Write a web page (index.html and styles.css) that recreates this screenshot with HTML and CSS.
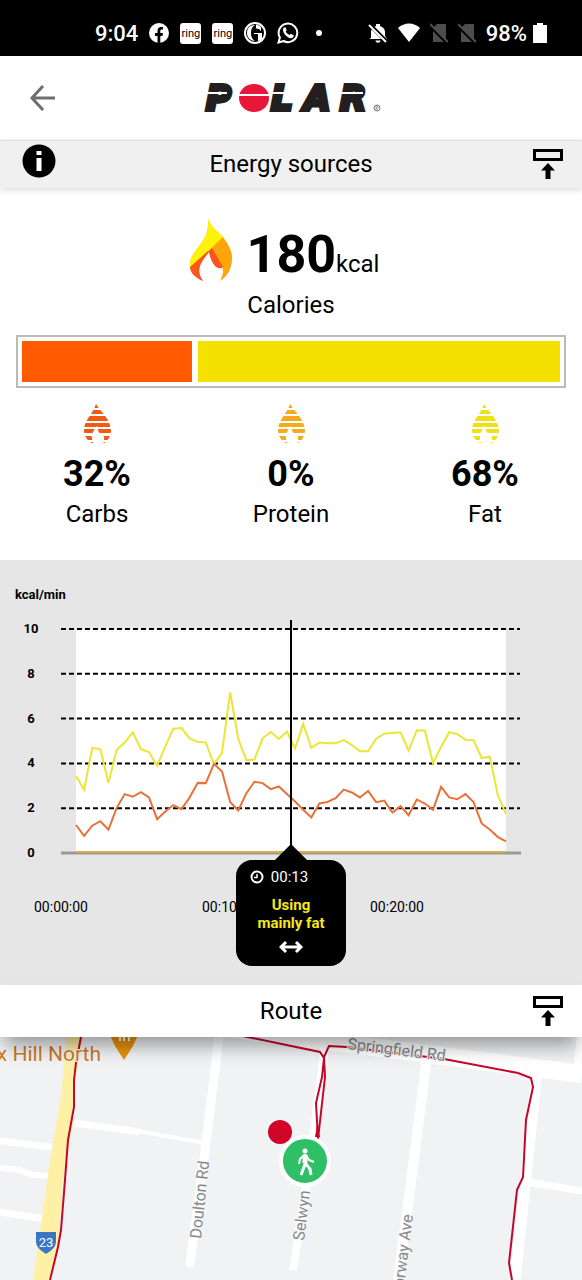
FILE: index.html
```html
<!DOCTYPE html>
<html lang="en">
<head>
  <meta charset="UTF-8">
  <meta name="viewport" content="width=device-width, initial-scale=1.0">
  <title>Energy sources</title>
  <link rel="stylesheet" href="styles.css">
</head>
<body>

  <!-- Shared shapes -->
  <svg class="defs" width="0" height="0" aria-hidden="true">
    <symbol id="collapse" viewBox="0 0 32 32">
      <path d="M2.500 2.500h27v9h-27z" fill="none" stroke="#000" stroke-width="3"/>
      <path d="M16 15l7 7.500h-4.500V31h-5v-8.500H9z"/>
    </symbol>
    <symbol id="stripes" viewBox="0 0 27 40">
      <clipPath id="rows">
        <path d="M0 0h27v4H0zM0 6h27v4H0zM0 12h27v5H0zM0 19h27v4H0zM0 25h27v4H0zM0 32h27v4H0zM0 38h27v1H0z"/>
      </clipPath>
      <path clip-path="url(#rows)" d="M12 0C15 6 26 14 27 26c0 6-3 11-8 14 2-5 1-9-1-10-3 0-4-3-5-8-3 4-6 8-5 12 0 3 1 4 2 6C3 37 0 32 0 26 0 16 9 10 12 0z"/>
    </symbol>
  </svg>

  <div class="status-bar">
    <div class="status-left">
      <span>9:04</span>
      <svg width="20" height="20" viewBox="0 0 20 20"><circle cx="10" cy="10" r="10" fill="#fff"/><path d="M8.500 20v-7H6v-3h2.500V8c0-2.600 1.500-4 3.700-4 1 0 1.800.1 1.800.1v2.500h-1.200c-1.200 0-1.500.7-1.500 1.500V10h2.600l-.4 3h-2.200v7z" fill="#000"/></svg>
      <span class="ring">ring</span>
      <span class="ring">ring</span>
      <svg width="22" height="22" viewBox="0 0 22 22"><circle cx="11" cy="11" r="10" fill="none" stroke="#fff" stroke-width="2"/><path d="M11 3C5 3 3 7 3 11s3 8 8 8c-3-2-4-4-4-8s1-6 4-8zM12 2.500v4c3 0 4 1 5 3V5c-1-1-3-2.500-5-2.500zM10 11h8v6c-1 1-2 2-4 2v-7h-4z" fill="#fff"/></svg>
      <svg width="22" height="22" viewBox="0 0 22 22"><path d="M1.500 20.500l1.400-5A9.300 9.300 0 1 1 6.500 19z" fill="none" stroke="#fff" stroke-width="2"/><path d="M7 5.500l1.500-.2 1.200 3-1 1.300c1 1.700 2 2.700 3.800 3.500l1.300-1.300 3 1.400c0 2-1.400 3-3 3C10 16 6 11 6 8c0-1 .3-2 1-2.500z" fill="#fff"/></svg>
      <i class="dot"></i>
    </div>
    <div class="status-right">
      <svg width="20" height="20" viewBox="0 0 20 20"><path d="M3 15V9c0-3 2-5 5-6V1h4v2c3 1 5 3 5 6v4l2 3H1zM7.500 17.500h5c0 3-5 3-5 0z" fill="#fff"/><path d="M1 1l18 18" stroke="#000" stroke-width="4"/><path d="M1 2l17 17" stroke="#fff" stroke-width="2"/></svg>
      <svg width="22" height="20" viewBox="0 0 22 20"><path d="M0 5c6-6 16-6 22 0L11 19z" fill="#fff"/></svg>
      <svg width="18" height="20" viewBox="0 0 18 20"><path d="M7 1h9v18H3V5z" fill="#4d4d4d"/><path d="M0 3l17 17" stroke="#000" stroke-width="3"/><path d="M0 1l18 18" stroke="#4d4d4d" stroke-width="2"/></svg>
      <svg width="18" height="20" viewBox="0 0 18 20"><path d="M7 1h9v18H3V5z" fill="#4d4d4d"/><path d="M0 3l17 17" stroke="#000" stroke-width="3"/><path d="M0 1l18 18" stroke="#4d4d4d" stroke-width="2"/></svg>
      <span class="battery">98%
        <svg width="14" height="20" viewBox="0 0 14 20"><path d="M4 0h6v2h4v18H0V2h4z" fill="#fff"/></svg>
      </span>
    </div>
  </div>

  <header>
    <button class="back" type="button" aria-label="Back">
      <svg width="26" height="26" viewBox="0 0 26 26"><path d="M25 13H2M13 1L2 13l11 12" fill="none" stroke="#6e6e6e" stroke-width="3"/></svg>
    </button>
    <svg class="logo" width="182" height="52" viewBox="0 -10 182 52" role="img" aria-label="Polar">
      <g class="logo-text">
        <text x="6" y="28">P</text>
        <text x="71" y="28">L</text>
        <text x="104" y="28">A</text>
        <text x="140" y="28">R</text>
      </g>
      <ellipse cx="54" cy="16" rx="15" ry="14" fill="#e8173a"/>
      <path d="M4 11h23M38 13h32M72 11h22M138 11h25" stroke="#fff" stroke-width="2"/>
      <circle cx="177" cy="26" r="3" fill="none" stroke="#777" stroke-width="1"/>
      <path d="M176 28v-4h2v2h-2l2 2" fill="none" stroke="#777" stroke-width=".6"/>
    </svg>
  </header>

  <div class="section-bar">
    <button class="info" type="button" aria-label="Information">
      <svg width="34" height="34" viewBox="0 0 34 34"><circle cx="17" cy="17" r="16.500"/><path d="M14.500 7h5v4h-5zM14.500 14h5v13h-5z" fill="#fff"/></svg>
    </button>
    <h2>Energy sources</h2>
    <button type="button" aria-label="Collapse energy sources"><svg width="32" height="32"><use href="#collapse"/></svg></button>
  </div>

  <main>
    <section class="summary">
      <div class="calories">
        <svg width="44" height="66" viewBox="0 0 44 66">
          <path d="M19 1c3 8 9 12 15 18 6 8 9 14 9 21 0 10-4 18-12 23 3-6 4-10 2-14-5 3-10-3-13-15-8 10-14 18-6 29C5 59 1 53 1 46c0-5 2-8 5-12 8-12 14-16 13-33z" fill="#ffa50a"/>
          <path d="M19 1c1 17-5 21-13 33-3 4-5 7-5 12v4l33-31C28 13 22 9 19 1z" fill="#fff30a"/>
          <path d="M1 49l18-16 1 1C12 44 6 52 14 63 5 59 1 54 1 49zM20 33l3-3 11 19c-5 4-12-2-14-16z" fill="#f8561c"/>
        </svg>
        <strong>180</strong><span>kcal</span>
      </div>
      <p>Calories</p>
      <div class="split">
        <div class="carbs"></div>
        <div class="fat"></div>
      </div>
      <div class="sources">
        <div class="source">
          <svg width="27" height="40" fill="#f05a14"><use href="#stripes"/></svg>
          <strong>32%</strong>
          <span>Carbs</span>
        </div>
        <div class="source">
          <svg width="27" height="40" fill="#f5a91c"><use href="#stripes"/></svg>
          <strong>0%</strong>
          <span>Protein</span>
        </div>
        <div class="source">
          <svg width="27" height="40" fill="#efe019"><use href="#stripes"/></svg>
          <strong>68%</strong>
          <span>Fat</span>
        </div>
      </div>
    </section>

    <section class="chart">
      <svg id="energyChart" viewBox="0 0 582 425"></svg>
      <div class="tooltip">
        <div class="time">
          <svg width="14" height="14" viewBox="0 0 14 14" fill="none" stroke="#fff"><circle cx="7" cy="7" r="5.500" stroke-width="2"/><path d="M7 4v3.500H4" stroke-width="1.500"/></svg>
          00:13
        </div>
        <b>Using<br>mainly fat</b>
        <svg width="24" height="14" viewBox="0 0 24 14"><path d="M2 7h20M7 2L2 7l5 5M17 2l5 5-5 5" fill="none" stroke="#fff" stroke-width="3"/></svg>
      </div>
    </section>

    <div class="section-bar route-bar">
      <h2>Route</h2>
      <button type="button" aria-label="Collapse route"><svg width="32" height="32"><use href="#collapse"/></svg></button>
    </div>

    <section class="map">
      <svg viewBox="0 0 582 243" preserveAspectRatio="xMidYMin slice">
        <!-- streets -->
        <g fill="none" stroke="#fff">
          <path d="M215-10L420 16l162 21" stroke-width="18"/>
          <path d="M219 0l-16 130-13 96" stroke-width="9" stroke-linecap="round"/>
          <path d="M325 10L309 130l-16 103" stroke-width="8"/>
          <path d="M427 20l-20 156-9 67" stroke-width="10"/>
          <path d="M537 35l-22 208" stroke-width="11"/>
          <path d="M580 0l-3 35M528 145l54 9M0 104l52 6M0 175l43 7M74 86l66 9" stroke-width="7"/>
          <path d="M0 131l20 2 12 5 20 1" stroke-width="6"/>
          <path d="M138 94l67 12" stroke-width="4"/>
        </g>
        <path d="M67 0h16l-8 43-2 43-10 57-5 64-9 36H33l17-120 10-57z" fill="#fff0a6"/>
        <!-- walked route -->
        <g fill="none" stroke="#c4062b" stroke-width="2">
          <path d="M81 0l-5 26-2 17v27l-6 33-3 40-4 50-3 17-8 33"/>
          <path d="M238-2l82 17 4 6-2 19-6 26 2 36 7-62-1-20 5-11 18 1 97 12 74 14 13 5 2 9-7 33-3 57-6 13-8 73 3 17"/>
        </g>
        <g class="street">
          <text transform="translate(347 12) rotate(7)">Springfield Rd</text>
          <text transform="translate(201 202) rotate(-84)">Doulton Rd</text>
          <text transform="translate(304 204) rotate(-83)">Selwyn St</text>
          <text transform="translate(413 178) rotate(-83)" text-anchor="end">Norway Ave</text>
        </g>
        <text class="suburb" x="101" y="24" text-anchor="end">Box Hill North</text>
        <path d="M110-2h28l-5 11-9 14-9-14z" fill="#e8930c"/>
        <path d="M120-2v6M124-2v6M129-2v6" stroke="#fff" stroke-width="2"/>
        <path d="M36 195h20v9c0 6-4 9-10 13-6-4-10-7-10-13z" fill="#3b76c2"/>
        <text class="shield" x="46" y="210" text-anchor="middle">23</text>
        <!-- markers -->
        <path d="M317 88l-2 12h5z" fill="#c4062b"/>
        <circle cx="280" cy="95" r="12" fill="#d00428"/>
        <circle cx="305" cy="124" r="24" fill="#2fbf66" stroke="#fff" stroke-width="4"/>
        <g fill="none" stroke="#fff" stroke-width="3" stroke-linejoin="round">
          <path d="M305 117v10l-4 11M305 126l5 6 1 6" stroke-width="3"/>
          <path d="M304 118l-4 4-1 5M306 118l3 5 5 2" stroke-width="2"/>
          <path d="M305 118v8" stroke-width="5"/>
        </g>
        <circle cx="305" cy="114" r="2.500" fill="#fff"/>
      </svg>
    </section>
  </main>

  <script>
    // kcal/min, one sample every 30 seconds
    const fat = [3.44, 2.82, 4.69, 4.64, 3.12, 4.6, 4.93, 5.39, 4.63, 4.51, 3.89, 4.75, 5.55, 5.58, 5.12, 4.96, 4.94, 3.96,
      4.48, 7.18, 5.09, 4.14, 4.17, 5.12, 5.4, 5.09, 5.42, 4.67, 5.76, 4.7, 4.93, 4.9, 4.9, 5.04, 4.82, 4.54,
      4.54, 5.1, 5.33, 5.36, 5.39, 4.57, 5.47, 5.47, 4.01, 4.73, 5.39, 5.3, 5.06, 5.04, 4.24, 4.3, 2.57, 1.75];
    const carbs = [1.25, 0.77, 1.22, 1.42, 1.04, 2, 2.63, 2.51, 2.72, 2.48, 1.51, 1.85, 2.14, 1.96, 2.48, 3.13, 3.12, 3.98,
      3.64, 2.28, 1.9, 2.67, 3.18, 3.12, 2.85, 2.97, 2.63, 2.3, 1.93, 1.59, 2.21, 2.28, 2.45, 2.83, 2.7, 2.48,
      2.77, 2.27, 2.34, 1.81, 2.09, 1.69, 2.39, 2.21, 1.93, 2.95, 2.48, 2.4, 2.63, 2.27, 1.32, 1.05, 0.71, 0.52];

    const left = 76;
    const right = 506;
    const bottom = 293;
    const unit = 22.4;

    function linePoints(values) {
      const step = (right - left) / (values.length - 1);
      return values.map((v, i) => `${left + i * step},${bottom - v * unit}`).join(' ');
    }

    function renderChart() {
      let svg = `<rect x="${left}" y="69" width="${right - left}" height="224" fill="#fff"/>`;
      svg += '<text class="unit" x="15" y="39">kcal/min</text>';

      for (let v = 0; v <= 10; v += 2) {
        const y = bottom - v * unit;
        svg += `<text class="y-label" x="31" y="${y + 4}">${v}</text>`;
        if (v > 0) {
          svg += `<line class="grid" x1="61" y1="${y}" x2="520" y2="${y}"/>`;
        }
      }

      svg += `<line x1="61" y1="${bottom}" x2="521" y2="${bottom}" stroke="#999" stroke-width="3"/>`;
      svg += `<line x1="${left}" y1="${bottom - 1}" x2="${right}" y2="${bottom - 1}" stroke="#d9ad45" stroke-width="2"/>`;
      svg += `<polyline class="fat-line" points="${linePoints(fat)}"/>`;
      svg += `<polyline class="carbs-line" points="${linePoints(carbs)}"/>`;

      ['00:00:00', '00:10:00', '00:20:00'].forEach((label, i) => {
        svg += `<text class="x-label" x="${61 + i * 168}" y="352">${label}</text>`;
      });

      svg += '<line x1="291" y1="60" x2="291" y2="290" stroke="#000" stroke-width="2"/>';
      svg += '<path d="M291 284l16 16h-32z"/>';
      document.getElementById('energyChart').innerHTML = svg;
    }

    // Initial render
    renderChart();
  </script>

</body>
</html>
```
FILE: styles.css
```css
body {
  font-family: Roboto, 'Noto Sans', sans-serif;
  margin: 0;
  background-color: #fff;
  color: #000;
}

svg {
  display: block;
  flex-shrink: 0;
}

.defs {
  position: absolute;
}

button {
  display: flex;
  padding: 0;
  border: 0;
  background: none;
  cursor: pointer;
}

.status-bar {
  display: flex;
  justify-content: space-between;
  box-sizing: border-box;
  height: 56px;
  padding: 10px 35px 0 95px;
  background-color: #000;
  color: #fff;
  font-size: 22px;
  font-weight: 500;
}

.status-left,
.status-right,
.battery {
  display: flex;
  align-items: center;
}

.status-left {
  gap: 11px;
}

.status-right {
  gap: 10px;
}

.battery {
  gap: 6px;
}

.ring {
  width: 21px;
  border-radius: 3px;
  background-color: #fff;
  color: #000;
  font-size: 11px;
  font-weight: 400;
  line-height: 21px;
  text-align: center;
}

.dot {
  width: 6px;
  height: 6px;
  margin-left: 6px;
  border-radius: 50%;
  background-color: #fff;
}

header {
  display: grid;
  grid-template-columns: 1fr auto 1fr;
  align-items: center;
  height: 84px;
  padding: 0 30px;
}

.logo-text {
  fill: #231f20;
  stroke: #231f20;
  stroke-width: 4px;
  font-family: 'DejaVu Sans', sans-serif;
  font-size: 34px;
  font-weight: 700;
  font-style: oblique;
}

.section-bar {
  display: grid;
  grid-template-columns: 1fr auto 1fr;
  align-items: center;
  box-sizing: border-box;
  height: 48px;
  padding: 0 18px 2px;
  border-top: 1px solid #ddd;
  background-color: #f0f0f0;
  box-shadow: 0 2px 6px rgba(0, 0, 0, 0.15);
}

.section-bar h2 {
  grid-column: 2;
  margin: 0;
  font-size: 24px;
  font-weight: 400;
  line-height: 28px;
}

.section-bar button:last-child {
  justify-self: end;
}

.info {
  align-self: start;
  margin: 3px 0 0 4px;
}

.summary {
  padding: 27px 16px 32px;
  text-align: center;
}

.calories {
  display: flex;
  justify-content: center;
  align-items: baseline;
  height: 72px;
  padding-right: 14px;
}

.calories svg {
  align-self: center;
}

.calories strong {
  margin-left: 14px;
  font-size: 52px;
  line-height: 80px;
}

.calories span {
  font-size: 24px;
  line-height: 28px;
}

.summary p {
  margin: 4px 0 16px;
  font-size: 24px;
  line-height: 28px;
}

.split {
  display: flex;
  gap: 6px;
  height: 41px;
  padding: 4px;
  border: 2px solid #bbb;
}

.split .carbs {
  flex: 32;
  background-color: #ff5a00;
}

.split .fat {
  flex: 68;
  background-color: #f5e100;
}

.sources {
  display: flex;
  margin: 16px -16px 0;
}

.source {
  flex: 1;
  display: flex;
  flex-direction: column;
  align-items: center;
}

.source strong {
  margin-top: 10px;
  font-size: 36px;
  line-height: 40px;
}

.source span {
  margin-top: 6px;
  font-size: 24px;
  line-height: 28px;
}

.chart {
  position: relative;
  background-color: #e6e6e6;
}

.chart > svg {
  width: 100%;
}

.unit,
.y-label {
  font-size: 13px;
  font-weight: 700;
}

.y-label,
.x-label {
  text-anchor: middle;
}

.x-label {
  font-size: 14px;
}

.grid {
  stroke: #000;
  stroke-width: 2px;
  stroke-dasharray: 5 3;
}

.fat-line,
.carbs-line {
  fill: none;
  stroke: #ece534;
  stroke-width: 2px;
}

.carbs-line {
  stroke: #e8713a;
}

.tooltip {
  position: absolute;
  bottom: 19px;
  left: 50%;
  transform: translateX(-50%);
  display: flex;
  flex-direction: column;
  align-items: center;
  box-sizing: border-box;
  width: 110px;
  height: 106px;
  padding-top: 8px;
  border-radius: 16px;
  background-color: #000;
  color: #fff;
  font-size: 15px;
  line-height: 18px;
}

.time {
  display: flex;
  align-items: center;
  gap: 7px;
  margin-right: 24px;
}

.tooltip b {
  margin: 10px 0 8px;
  color: #f5e61e;
  text-align: center;
}

.route-bar {
  position: relative;
  height: 52px;
  padding-bottom: 0;
  border-top: 0;
  background-color: #fff;
  box-shadow: 0 12px 20px -4px rgba(0, 0, 0, 0.4);
}

.map {
  overflow: hidden;
  background-color: #f0f2f4;
}

.map svg {
  width: 100%;
}

.street {
  fill: #85898d;
  stroke: #f7f8f9;
  stroke-width: 2px;
  paint-order: stroke;
  font-size: 16px;
}

.suburb {
  fill: #c8782a;
  stroke: #f7f8f9;
  stroke-width: 2px;
  paint-order: stroke;
  font-size: 21px;
}

.shield {
  fill: #fff;
  font-size: 13px;
}
```
